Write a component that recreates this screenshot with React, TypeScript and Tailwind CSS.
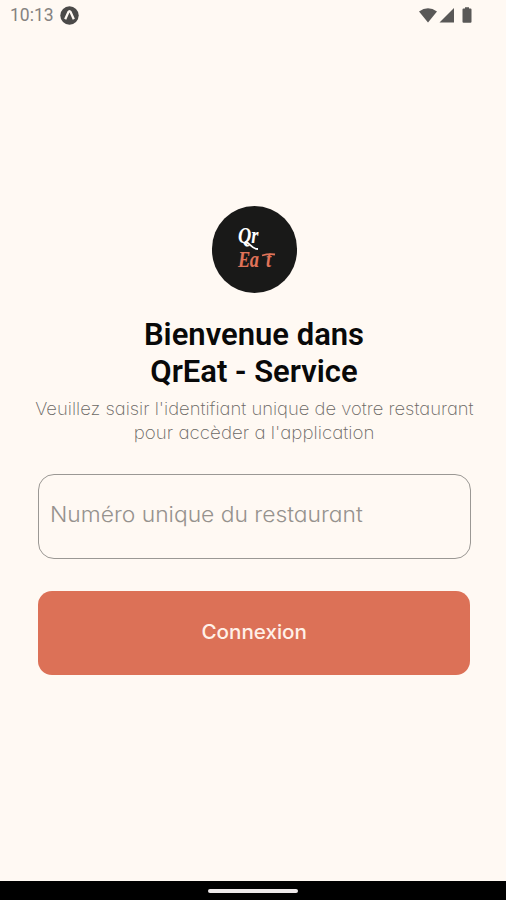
function StatusBar() {
  return (
    <header className="flex h-8 items-center pl-[10px] pr-[31px] text-[#858280]">
      <span className="font-['Roboto',sans-serif] text-[17.5px] leading-none">10:13</span>
      <svg className="ml-[6px] -mt-px" width="19" height="19" viewBox="0 0 19 19">
        <circle cx="9.5" cy="9.5" r="9.2" fill="#4b4a49" />
        <path d="M5.200 13.200 8.300 6.200q1.200-2 2.400 0L13.800 13.200" fill="none" stroke="#fff9f3" strokeWidth="2.300" />
      </svg>
      <svg className="ml-auto -mt-px" width="56" height="18" viewBox="0 0 56 18" fill="#595857">
        <path d="M0 4.400Q9-1.800 18 4.400L9 15.500Z" />
        <path d="M35 1v14.500H20.500Z" />
        <path d="M46 1.600V.3h4v1.300H51.500q1 0 1 1v12.200q0 1-1 1h-7q-1 0-1-1V2.600q0-1 1-1Z" />
      </svg>
    </header>
  );
}

function Logo() {
  return (
    <div className="relative h-[87px] w-[85px] rounded-full bg-[#191918] font-['Liberation_Serif',serif] font-bold italic">
      <div className="absolute left-[26px] top-[17px] flex origin-left scale-x-[0.8] flex-col">
        <span className="h-[25px] text-[23px] leading-[25px] text-white">Qr</span>
        <span className="h-[23px] text-[23px] leading-[23px] tracking-[-0.5px] text-[#e07358]">
          Ea<span className="ml-[9px]">t</span>
        </span>
      </div>
      <svg className="absolute inset-0" width="85" height="87" viewBox="0 0 85 87" fill="none">
        <path d="M33 36c5 0 6 7 13 7" stroke="#fff" strokeWidth="1.800" />
        <path d="M50 49.500q7-2 13-1" stroke="#e07358" strokeWidth="1.800" />
      </svg>
    </div>
  );
}

export default function App() {
  return (
    <div className="flex h-[900px] w-[506px] flex-col overflow-hidden bg-[#fff9f3] font-['Inter',sans-serif]">
      <StatusBar />
      <main className="flex flex-1 flex-col items-center pl-[38px] pr-[36px] pt-[174px]">
        <Logo />
        <h1 className="mt-[23px] whitespace-nowrap text-center font-['Roboto',sans-serif] text-[31px] font-semibold leading-[37px] text-[#090909]">
          Bienvenue dans
          <br />
          QrEat - Service
        </h1>
        <p className="mt-[7px] flex flex-col items-center whitespace-nowrap text-[17px] font-extralight leading-[24px] text-[#6b6865] [font-feature-settings:'cv11']">
          <span className="scale-x-[1.083]">Veuillez saisir l'identifiant unique de votre restaurant</span>
          <span className="scale-x-[1.103]">pour accèder a l'application</span>
        </p>
        <div className="mt-[29px] flex h-[85px] w-[433px] shrink-0 rounded-[16px] border border-[#9b9894] pb-[4px] pl-[11px]">
          <input
            className="w-[380px] origin-left scale-x-[1.087] bg-transparent text-[21px] font-light text-[#777470] outline-none placeholder:text-[#96928e] [font-feature-settings:'cv11']"
            placeholder="Numéro unique du restaurant"
          />
        </div>
        <button className="mt-[32px] h-[84px] w-[432px] shrink-0 rounded-[14px] bg-[#dc7157] pb-[3px] pl-px text-[20px] font-medium text-[#fff0e8]">
          <span className="inline-block scale-x-[1.03]">Connexion</span>
        </button>
      </main>
      <footer className="flex h-[19px] items-center justify-center bg-black">
        <div className="h-[4px] w-[90px] rounded-sm bg-[#eee9ea]" />
      </footer>
    </div>
  );
}
